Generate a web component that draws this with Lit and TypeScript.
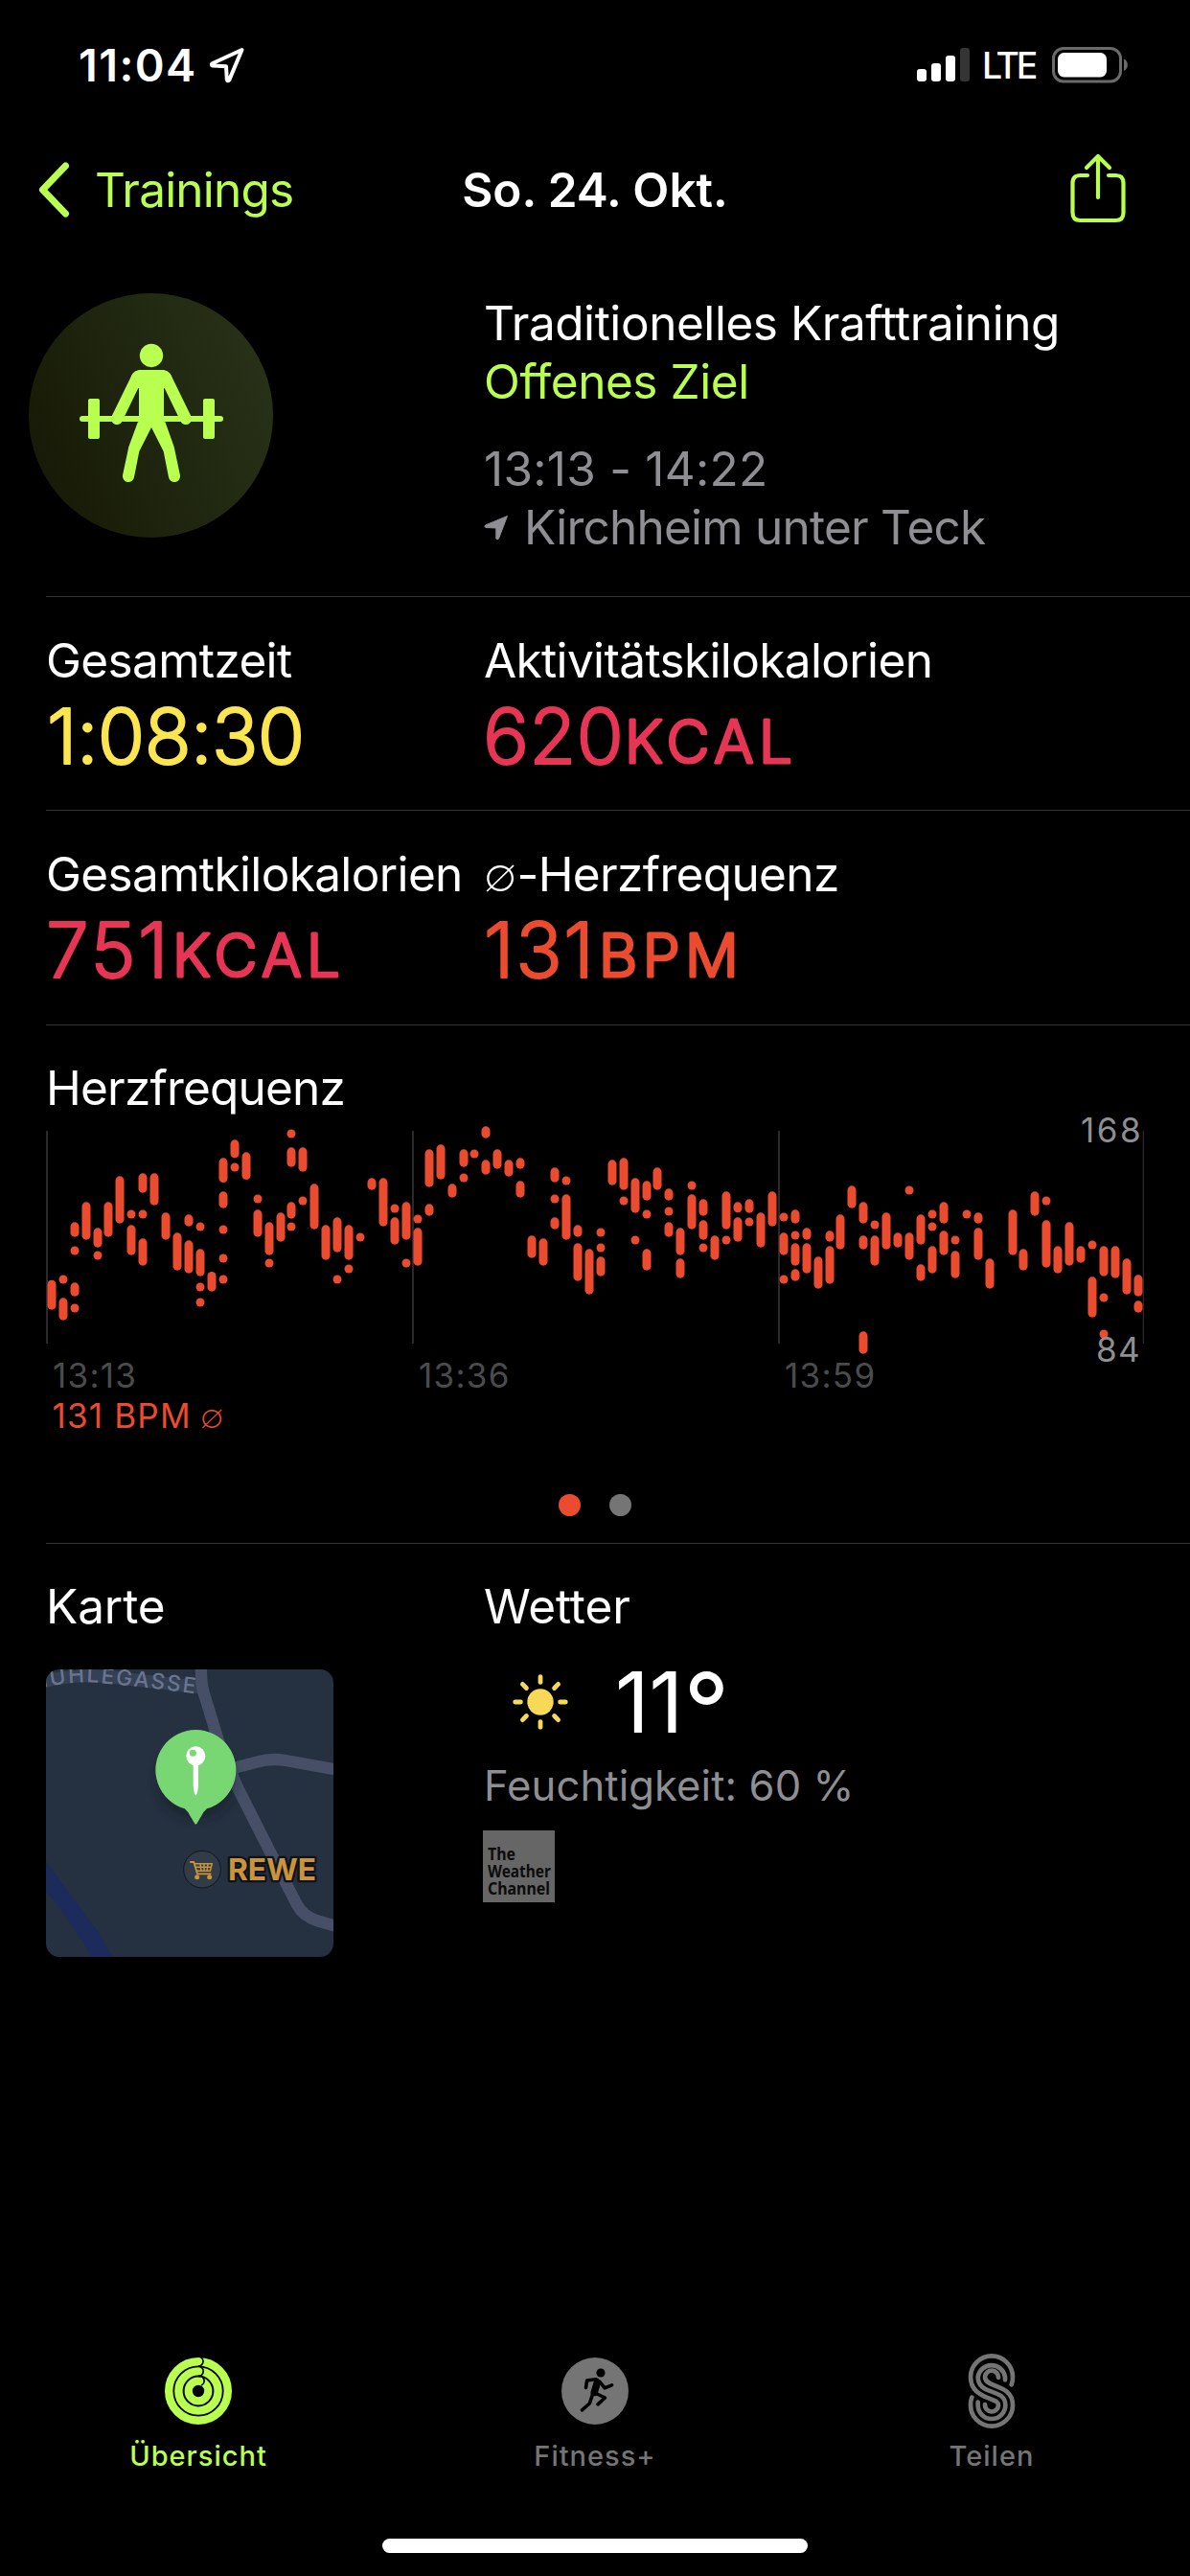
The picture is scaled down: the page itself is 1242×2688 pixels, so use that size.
import { LitElement, css, html, svg } from "lit";
import { customElement, property } from "lit/decorators.js";
import { classMap } from "lit/directives/class-map.js";

/** One vertical run of samples: [top, bottom], or [center] for a single dot. */
type Run = [number, number] | [number];

/* Heart-rate columns, left to right. Values are thirds of a pixel. */
const HEART_RATE: Run[][] = [
  [[737, 830]],
  [[735], [793, 863]],
  [[556, 602], [645], [745, 788], [825]],
  [[493, 611]],
  [[574, 635], [660]],
  [[493, 602]],
  [[412, 560]],
  [[531], [565, 659]],
  [[403, 464], [531], [607, 692]],
  [[403, 503]],
  [[526, 611]],
  [[589, 707]],
  [[532, 569], [613, 716]],
  [[570], [640, 725], [759], [807]],
  [[711, 773]],
  [[355, 432], [460, 512], [579], [669], [735]],
  [[298, 355], [384]],
  [[337, 423]],
  [[483], [517, 602]],
  [[556, 659], [684]],
  [[526, 617]],
  [[279], [322, 383], [493, 545], [570]],
  [[322, 398], [489]],
  [[436, 578]],
  [[565, 674]],
  [[541, 650], [735]],
  [[565, 674], [702]],
  [[603]],
  [[418, 455]],
  [[418, 569]],
  [[513], [541, 626]],
  [[493, 611], [684]],
  [[546], [574, 692]],
  [[328, 446], [499, 536]],
  [[313, 422]],
  [[436, 479]],
  [[328, 383], [417]],
  [[342]],
  [[256, 293], [361, 407]],
  [[328, 389]],
  [[361, 413]],
  [[355, 389], [427, 479]],
  [[598, 668]],
  [[607, 692]],
  [[385, 431], [483], [541, 578]],
  [[426], [469, 611]],
  [[565, 602], [622, 740]],
  [[640, 782]],
  [[588], [636], [664, 725]],
  [[361, 440]],
  [[355, 455], [489]],
  [[418, 527], [612]],
  [[427, 488], [531], [640, 707]],
  [[385, 455]],
  [[451, 488], [522], [556, 602]],
  [[574, 659], [670, 731]],
  [[441], [469, 578]],
  [[484, 536], [550, 611], [636]],
  [[598, 674]],
  [[460, 578], [612]],
  [[493, 526], [541, 617]],
  [[484, 527], [555]],
  [[526, 635]],
  [[460, 569]],
  [[540], [589, 659], [735]],
  [[517, 560], [597], [622, 692], [703, 740]],
  [[574, 611], [622, 716]],
  [[664, 764]],
  [[583, 617], [631, 749]],
  [[532, 641]],
  [[442, 512]],
  [[493, 560], [598, 641], [898, 968]],
  [[564], [598, 692]],
  [[526, 641]],
  [[589, 635]],
  [[456], [589, 674]],
  [[532, 626], [688, 740]],
  [[531], [570], [631, 716]],
  [[493, 560], [583, 659]],
  [[612], [646, 731]],
  [[531]],
  [[526, 560], [574, 674]],
  [[670, 764]],
  [],
  [[517, 659]],
  [[640, 707]],
  [[460, 536]],
  [[489], [550, 698]],
  [[631, 716]],
  [[556, 692]],
  [[631, 683]],
  [[627], [727, 854]],
  [[631, 725], [792], [906]],
  [[631, 731]],
  [[670, 782]],
  [[721, 788], [802, 839]],
];

const BAR_WIDTH = 9;
const COLUMN_PITCH = 11.9375;
const toY = (v: number) => v / 3 - 75;

@customElement("heart-rate-chart")
export class HeartRateChart extends LitElement {
  private renderRun(index: number, run: Run) {
    const center = Math.floor(6 + index * COLUMN_PITCH + 0.3);
    const top = run.length === 1 ? toY(run[0]) - BAR_WIDTH / 2 : toY(run[0]);
    const height = run.length === 1 ? BAR_WIDTH : (run[1] - run[0]) / 3;
    return svg`<rect x=${center - BAR_WIDTH / 2} y=${top} width=${BAR_WIDTH} height=${height} rx=${BAR_WIDTH / 2} />`;
  }

  override render() {
    return html`
      <svg viewBox="0 0 1194 335" width="1194" height="335">
        <g class="grid">
          ${[0, 382, 764, 1144.7].map((x) => svg`<rect x=${x} y="15" width=${x > 1000 ? 1.3 : 2} height="222" />`)}
        </g>
        <g class="bars">${HEART_RATE.map((runs, i) => runs.map((run) => this.renderRun(i, run)))}</g>
        <g class="limits">
          <text x="1080" y="27" letter-spacing="2.5">168</text>
          <text x="1096" y="256" letter-spacing="1.4">84</text>
        </g>
        <g class="times">
          <text x="7" y="283">13:13</text>
          <text x="389" y="283">13:36</text>
          <text x="771" y="283">13:59</text>
        </g>
        <text class="average" x="6.500" y="325">131 BPM</text>
        <text class="average thin" x="161" y="325">∅</text>
      </svg>
    `;
  }

  static override styles = css`
    :host { display: block; }
    svg { display: block; }
    text { font: 35px Inter, sans-serif; }
    .grid { fill: #2a2a2c; }
    .bars { fill: #eb4b2f; }
    .limits { fill: #8e8e93; }
    .times { fill: #4b4b4d; letter-spacing: 1.3px; }
    .average { fill: #eb4b2f; letter-spacing: 1.2px; }
    .average.thin { font-weight: 200; }
  `;
}

/** Label with a large rounded number and an optional small-caps unit. */
@customElement("metric-cell")
export class MetricCell extends LitElement {
  @property() label = "";
  @property() symbol = "";
  @property() value = "";
  @property() unit = "";
  @property() color = "";
  @property({ type: Number }) offset = 0;
  @property({ type: Number }) unitX = 0;
  @property({ type: Number }) tracking = 0;

  override render() {
    return html`
      <div class="label">${this.symbol ? html`<span class="symbol">${this.symbol}</span>` : ""}${this.label}</div>
      <svg width="400" height="80" fill=${this.color} stroke=${this.color}>
        <text class="value" x=${this.offset} y="69.500" letter-spacing=${this.tracking}>${this.value}</text>
        ${this.unit ? svg`<text class="unit" x=${this.unitX} y="69">${this.unit}</text>` : ""}
      </svg>
    `;
  }

  static override styles = css`
    :host { display: block; white-space: nowrap; }
    .label { font-size: 49.5px; line-height: 60px; letter-spacing: -0.64px; }
    .symbol { font-weight: 200; margin-right: 1px; }
    svg { display: block; margin-top: 8px; overflow: visible; stroke-linejoin: round; }
    .value { font: 300 80px Inter, sans-serif; stroke-width: 2; }
    .unit { font: 300 62px Inter, sans-serif; letter-spacing: 5.4px; stroke-width: 3; }
  `;
}

const locationIcon = html`
  <svg class="location" width="40" height="40" viewBox="0 0 40 40">
    <path d="M35.5 4 4.5 18.2Q3 19.8 5 20.6L19 21.2 19.8 35Q20.6 37.2 22.2 35.6Z" fill="none" stroke="#fff" stroke-width="4" stroke-linejoin="round" />
  </svg>
`;

const signalIcon = html`
  <svg width="56" height="36" viewBox="0 0 56 36" fill="#fff">
    <rect x="0" y="22" width="10" height="13" rx="3" />
    <rect x="15" y="16" width="10" height="19" rx="3" />
    <rect x="30" y="8" width="10" height="27" rx="3" />
    <rect x="45" y="0" width="10" height="35" rx="3" fill="#343434" />
  </svg>
`;

const batteryIcon = html`
  <svg class="battery" width="80" height="38" viewBox="0 0 80 38">
    <rect x="1.5" y="1.5" width="70" height="34.5" rx="10.5" fill="none" stroke="#6a6a6a" stroke-width="3" />
    <rect x="6" y="6" width="51" height="25.5" rx="6.5" fill="#fff" />
    <path d="M75 12.500A7 7 0 0 1 75 25Z" fill="#6a6a6a" />
  </svg>
`;

const backIcon = html`
  <svg width="36" height="60" viewBox="0 0 36 60">
    <path d="M30.500 5 6.500 30 30.500 55" fill="none" stroke="currentColor" stroke-width="7" stroke-linecap="round" stroke-linejoin="round" />
  </svg>
`;

const shareIcon = html`
  <svg class="share" width="58" height="74" viewBox="0 0 58 74">
    <g fill="none" stroke="currentColor" stroke-width="4.200" stroke-linecap="round" stroke-linejoin="round">
      <path d="M18 23H10.500Q2.500 23 2.500 31V62Q2.500 70 10.500 70H47.500Q55.500 70 55.500 62V31Q55.500 23 47.500 23H40" />
      <path d="M29 46V4M17 15 29 3 41 15" />
    </g>
  </svg>
`;

const strengthIcon = html`
  <svg width="255" height="255" viewBox="30 33 765 765">
    <defs>
      <linearGradient id="disc" x1="0" y1="0.700" x2="1" y2="0.300">
        <stop offset="0" stop-color="#171a06" />
        <stop offset="1" stop-color="#283218" />
      </linearGradient>
    </defs>
    <circle cx="412.500" cy="415.500" r="382.500" fill="url(#disc)" />
    <g fill="#b9ff4f">
      <circle cx="414" cy="228" r="36.500" />
      <path d="M380 273H448C462 273 470 280 476 290L490 340 453 330V436L457 435 485 514 504 603A18 18 0 0 1 468 609L452 528 414 453 376 528 360 609A18 18 0 0 1 324 603L343 514 372 435 375 436V330L338 340 352 290C358 280 366 273 380 273Z" />
      <path d="M368 299 306 426M460 299 522 426" stroke="#b9ff4f" stroke-width="36" stroke-linecap="round" />
      <rect x="189" y="417" width="450" height="18" rx="9" />
      <rect x="216" y="363" width="36" height="126" rx="6" />
      <rect x="576" y="363" width="36" height="126" rx="6" />
    </g>
  </svg>
`;

const mapTile = html`
  <svg class="map" width="300" height="300" viewBox="0 0 900 900">
    <defs>
      <filter id="soft" x="-50%" y="-50%" width="200%" height="200%"><feGaussianBlur stdDeviation="16" /></filter>
      <path id="street" d="M-75 72Q60 34 165 42 300 54 472 77" />
    </defs>
    <rect width="900" height="900" fill="#253040" />
    <path d="M0 600 170 832 208 900H142L118 858 35 735 0 697Z" fill="#1c2a5c" />
    <path d="M-10 38Q120 8 240 28L480 56" fill="none" stroke="#344054" stroke-width="40" />
    <g fill="none" stroke="#464f66" stroke-width="37">
      <path d="M485-10Q486 45 493 70L545 240 600 370 706 580 785 735Q805 773 850 787L905 803" />
      <path d="M590 308 660 290Q705 277 750 285L905 313" />
    </g>
    <text class="street"><textPath href="#street" startOffset="100%" text-anchor="end">MÜHLEGASSE</textPath></text>
    <ellipse cx="469" cy="350" rx="120" ry="116" fill="#141c28" opacity="0.550" filter="url(#soft)" />
    <path d="M434 436A126 126 0 1 1 504 436Q492 446 486 460L472 483Q469 488 466 483L452 460Q446 446 434 436Z" fill="#78d773" />
    <circle cx="469" cy="271" r="30" fill="#fff" />
    <circle cx="460" cy="262" r="10.500" fill="#78d773" />
    <path d="M461 296H477V362Q476 382 471 392 469 395 467 392 462 382 461 362Z" fill="#fff" />
    <circle cx="489" cy="626" r="58" fill="#323c49" stroke="#10161f" stroke-width="3" />
    <g fill="none" stroke="#cb943b" stroke-width="5.500" stroke-linejoin="round" stroke-linecap="round">
      <path d="M453 603H463L474 640H515" />
      <path d="M467 608H520L514 631H473M470 619H517M483 608 486 631M495 608V631M507 608 504 631" stroke-width="4.500" />
    </g>
    <circle cx="473" cy="650" r="7.500" fill="#cb943b" />
    <circle cx="512" cy="650" r="7.500" fill="#cb943b" />
    <text class="shop" x="570" y="661">REWE</text>
  </svg>
`;

const sunIcon = html`
  <svg width="58" height="58" viewBox="-29 -29 58 58" fill="#f8d857">
    <circle r="13.700" />
    ${[0, 45, 90, 135, 180, 225, 270, 315].map(
      (angle) => svg`<rect x="-2.4" y="-28.7" width="4.800" height="10.500" rx="2.400" transform="rotate(${angle})" />`,
    )}
  </svg>
`;

const ringsIcon = html`
  <svg width="80" height="80" viewBox="-40 -40 80 80" fill="none">
    <g stroke="currentColor">
      <circle r="30.800" stroke-width="8.400" />
      <circle r="20.600" stroke-width="8.400" />
      <circle r="10.300" stroke-width="8.200" />
    </g>
    <g stroke="#000" stroke-width="1.700">
      <path d="M0-36A5 5 0 0 1 0-25.900" />
      <path d="M0-25.900A5 5 0 0 1 0-15.500" />
      <path d="M0-15.500A5 5 0 0 1 3-6" />
    </g>
  </svg>
`;

const runnerIcon = html`
  <svg width="80" height="80" viewBox="-40 -40 80 80">
    <circle r="35" fill="currentColor" />
    <circle cx="6" cy="-19" r="4.600" fill="#000" />
    <g fill="none" stroke="#000" stroke-width="3.600" stroke-linecap="round" stroke-linejoin="round">
      <path d="M-9.500-3.500-8.400-11 1-12.300 5-9.500 10.200-3.200 17.600-6.200" />
      <path d="M-1 1.500 10.500 7 3 13.800" />
      <path d="M-2 2-5.700 13-13.600 19.800" />
      <path d="M2.400-9-.8 1.500" stroke-width="7.500" />
    </g>
  </svg>
`;

const sharingIcon = html`
  <svg width="80" height="80" viewBox="583 76 240 240" fill="none" stroke="currentColor" stroke-width="14" stroke-linecap="round">
    <path d="M765 176Q769 167 769 152A66 66 0 0 0 637 152C637 195 668 208 695 219 712 226 724 228 724 241A21 21 0 0 1 682 238" />
    <path d="M745 161V152A43 43 0 0 0 660 152C660 180 680 190 703 198 728 207 746 214 746 240A43 43 0 0 1 660 240V231" />
    <path d="M724 154A21 21 0 0 0 682 152C682 165 692 171 711 178 740 189 769 200 769 240A66 66 0 0 1 637 240Q637 225 641 216" />
  </svg>
`;

const TABS = [
  { label: "Übersicht", icon: ringsIcon, active: true },
  { label: "Fitness+", icon: runnerIcon, active: false },
  { label: "Teilen", icon: sharingIcon, active: false },
];

@customElement("app-root")
export class AppRoot extends LitElement {
  override render() {
    return html`
      <header class="status">
        <span class="time">11:04</span>
        ${locationIcon}
        <span class="spacer"></span>
        ${signalIcon}
        <span class="network">LTE</span>
        ${batteryIcon}
      </header>

      <nav class="nav">
        <div class="back">${backIcon}<span>Trainings</span></div>
        <div class="title">So. 24. Okt.</div>
        <div class="action">${shareIcon}</div>
      </nav>

      <section class="hero">
        ${strengthIcon}
        <div class="summary">
          <div class="workout">Traditionelles Krafttraining</div>
          <div class="goal">Offenes Ziel</div>
          <div class="when">13:13 - 14:22</div>
          <div class="where">
            <svg width="26" height="27" viewBox="0 0 26 27"><path d="M24.500 1.500 15.500 25Q14 27 12.800 25V14L2 13.500Q0 12.500 1.500 11Z" fill="currentColor" stroke="currentColor" stroke-linejoin="round" /></svg>
            <span>Kirchheim unter Teck</span>
          </div>
        </div>
      </section>
      <div class="divider"></div>

      <section class="metrics">
        <metric-cell label="Gesamtzeit" value="1:08:30" color="#fbe551" offset="1" tracking="-0.6"></metric-cell>
        <metric-cell label="Aktivitätskilokalorien" value="620" unit="KCAL" color="#e73556" offset="-1" unitX="147" tracking="0.1"></metric-cell>
      </section>
      <div class="divider"></div>

      <section class="metrics second">
        <metric-cell label="Gesamtkilokalorien" value="751" unit="KCAL" color="#e73556" offset="0" unitX="132" tracking="2.3"></metric-cell>
        <metric-cell symbol="∅" label="-Herzfrequenz" value="131" unit="BPM" color="#eb4b2f" offset="0" unitX="120" tracking="1.7"></metric-cell>
      </section>
      <div class="divider"></div>

      <section class="heart">
        <div class="heading">Herzfrequenz</div>
        <heart-rate-chart></heart-rate-chart>
        <div class="pager"><i class="dot current"></i><i class="dot"></i></div>
      </section>
      <div class="divider"></div>

      <section class="details">
        <div>
          <div class="heading wide">Karte</div>
          ${mapTile}
        </div>
        <div>
          <div class="heading wide">Wetter</div>
          <div class="temperature">${sunIcon}<span>11<span class="degree">°</span></span></div>
          <div class="humidity">Feuchtigkeit: 60 %</div>
          <svg class="provider" width="75" height="75" viewBox="0 0 75 75">
            <rect width="75" height="75" fill="#666" />
            <text x="5" y="31" textLength="29" lengthAdjust="spacingAndGlyphs">The</text>
            <text x="5" y="49" textLength="66" lengthAdjust="spacingAndGlyphs">Weather</text>
            <text x="5" y="67" textLength="65" lengthAdjust="spacingAndGlyphs">Channel</text>
          </svg>
        </div>
      </section>

      <footer class="tabs">
        ${TABS.map(
          (tab) => html`<div class=${classMap({ tab: true, active: tab.active })}>${tab.icon}<span>${tab.label}</span></div>`,
        )}
      </footer>
      <div class="home"></div>
    `;
  }

  static override styles = css`
    :host {
      display: flex; flex-direction: column;
      width: 1242px; height: 2688px;
      box-sizing: border-box; overflow: hidden;
      background: #000; color: #fff;
      font-family: Inter, sans-serif;
      font-size: 49.5px;
      white-space: nowrap;
    }
    svg { display: block; flex: none; }
    .spacer { flex: 1; }
    .divider { flex: none; height: 1px; margin-left: 48px; background: #343436; }

    /* ── Status bar and navigation ── */
    .status { flex: none; display: flex; align-items: center; height: 132px; padding: 4px 64px 0 82px; box-sizing: border-box; }
    .time { font-size: 46.8px; font-weight: 600; letter-spacing: 1.4px; }
    .location { margin: 0 0 1px 11px; }
    .network { width: 56px; font-size: 37.5px; font-weight: 500; letter-spacing: -3.2px; margin: 1px 17px 0 12px; }

    .nav { flex: none; display: grid; grid-template-columns: 1fr auto 1fr; align-items: center; height: 132px; }
    .back { display: flex; align-items: center; gap: 25px; padding-left: 38px; color: #b9ff4f; letter-spacing: -0.8px; }
    .title { font-weight: 600; }
    .action { display: flex; justify-content: flex-end; padding: 0 67px 2px 0; color: #b9ff4f; }

    /* ── Workout summary ── */
    .hero { flex: none; display: grid; grid-template-columns: 475px 1fr; height: 358px; padding: 42px 0 0 30px; box-sizing: border-box; }
    .summary { padding-top: 1px; line-height: 61px; letter-spacing: -0.45px; }
    .goal { color: #b9ff4f; }
    .when { margin-top: 30px; color: #8e8e93; letter-spacing: 0.26px; }
    .where { display: flex; align-items: center; gap: 16px; color: #8e8e93; letter-spacing: -0.77px; }

    .metrics { flex: none; display: grid; grid-template-columns: 457px 1fr; height: 222px; padding: 36px 0 0 48px; box-sizing: border-box; }
    .metrics.second { height: 223px; }

    /* ── Heart rate ── */
    .heart { flex: none; height: 540px; padding: 35px 0 0 48px; box-sizing: border-box; }
    .heading { line-height: 60px; letter-spacing: -0.8px; }
    .heading.wide { letter-spacing: -0.1px; }
    .pager { display: flex; justify-content: center; gap: 29.5px; margin: 59px 0 0 -48px; }
    .dot { width: 23px; height: 23px; border-radius: 50%; background: #757575; }
    .dot.current { background: #eb4b2f; }

    /* ── Map and weather ── */
    .details { flex: 1; display: grid; grid-template-columns: 457px 1fr; padding: 35px 0 0 48px; }
    .map { margin-top: 36px; border-radius: 14px; }
    .street { font: 500 68px Inter, sans-serif; letter-spacing: 6px; fill: #69758f; }
    .shop { font: 700 95px Inter, sans-serif; fill: #cb943b; stroke: #0e131b; stroke-width: 14; stroke-linejoin: round; paint-order: stroke; }
    .temperature { display: flex; align-items: center; height: 90px; margin-top: 25px; padding-left: 30px; gap: 49px; font-size: 87.5px; line-height: 90px; }
    .degree { font-size: 106px; line-height: 0; vertical-align: -14px; }
    .humidity { margin-top: 16px; font-size: 43.6px; line-height: 54px; letter-spacing: 0.08px; color: #8e8e93; }
    .provider { margin: 19px 0 0 -1px; }
    .provider text { font: 700 17px "Noto Sans", sans-serif; fill: #0c0c0c; }

    /* ── Tab bar ── */
    .tabs { flex: none; display: grid; grid-template-columns: repeat(3, 1fr); }
    .tab {
      display: flex; flex-direction: column; align-items: center; gap: 10px;
      color: #757575; font-size: 29px; font-weight: 500; line-height: 36px; letter-spacing: 1px;
    }
    .tab.active { color: #b9ff4f; }
    .home { flex: none; width: 444px; height: 15px; margin: 68px auto 24px; border-radius: 8px; background: #fff; }
  `;
}
